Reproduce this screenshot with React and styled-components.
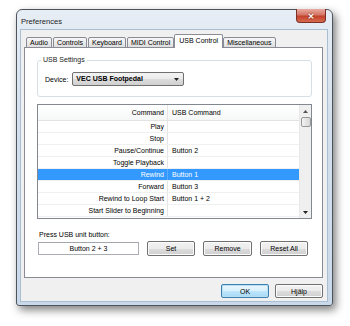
import React, { useState } from 'react'
import styled, { createGlobalStyle } from 'styled-components'

const GlobalStyle = createGlobalStyle`
  html, body {
    margin: 0;
    background: #ffffff;
    font-family: "Liberation Sans", Arial, sans-serif;
    font-size: 7px;
    line-height: 8px;
    color: #000;
  }
`;

const Page = styled.div`
  width: 350px;
  height: 326px;
  padding: 9px 0 0 16px;
  box-sizing: border-box;
  overflow: hidden;
`;

const Window = styled.div`
  width: 317px;
  height: 297px;
  box-sizing: border-box;
  border: 1px solid #4d545c;
  border-radius: 6px 6px 3px 3px;
  background: linear-gradient(#e6edf5, #d3dfec 40%, #cad9ea);
  box-shadow: 3px 4px 9px rgba(0, 0, 0, 0.5);
  padding: 0 4px 3px 3px;
  display: flex;
  flex-direction: column;
`;

const TitleBar = styled.div`
  height: 19px;
  flex: none;
  display: flex;
  align-items: flex-start;
  justify-content: space-between;
`;

const Title = styled.div`
  padding: 7px 0 0 1px;
  font-size: 7.6px;
  line-height: 9px;
  color: #1b1b1b;
`;

const CloseButton = styled.div`
  width: 30px;
  height: 14px;
  margin: -1px 2px 0 0;
  box-sizing: border-box;
  border: 1px solid #7b2f25;
  border-top: none;
  border-radius: 0 0 4px 4px;
  background: linear-gradient(#e8aba0, #d47564 45%, #c4422c 55%, #d66c4f);
  display: flex;
  align-items: center;
  justify-content: center;
  color: #fff;
  font-family: "DejaVu Sans", sans-serif;
  font-weight: bold;
  font-size: 9px;
  line-height: 10px;
  text-shadow: 0 0 2px #6a1a10;
`;

const Client = styled.div`
  flex: 1;
  min-height: 0;
  background: #f0f0f0;
  border: 1px solid #a9bdd3;
  padding: 4px 4px 4px 3px;
  display: flex;
  flex-direction: column;
`;

const TabStrip = styled.div`
  flex: none;
  display: flex;
  align-items: flex-end;
  padding-left: 2px;
  gap: 1px;
  position: relative;
  z-index: 1;
  margin-bottom: -1px;
`;

const Tab = styled.div`
  height: ${p => (p.$active ? '14px' : '11px')};
  box-sizing: border-box;
  padding: 0 ${p => (p.$active ? '4px' : '3px')};
  margin: 0 ${p => (p.$active ? '-1px' : '0')};
  border: 1px solid #898c95;
  border-bottom: ${p => (p.$active ? 'none' : '1px solid #898c95')};
  border-radius: 2px 2px 0 0;
  background: ${p => (p.$active ? '#ffffff' : 'linear-gradient(#f7f7f7, #ebebeb 50%, #dedede)')};
  display: flex;
  align-items: ${p => (p.$active ? 'flex-start' : 'center')};
  padding-top: ${p => (p.$active ? '2px' : '0')};
  line-height: 8px;
  white-space: nowrap;
`;

const Panel = styled.div`
  height: 231px;
  flex: none;
  box-sizing: border-box;
  background: #ffffff;
  border: 1px solid #898c95;
  padding: 8px 10px 0 12px;
  display: flex;
  flex-direction: column;
`;

const GroupBox = styled.fieldset`
  margin: 0;
  border: 1px solid #d5dfe5;
  border-radius: 3px;
  padding: 8px 7px 10px 7px;
  display: flex;
  align-items: center;
  gap: 4px;
`;

const GroupLabel = styled.legend`
  margin-left: -4px;
  padding: 0 2px;
  line-height: 8px;
  color: #222;
`;

const FieldLabel = styled.span`
  line-height: 9px;
`;

const Combo = styled.div`
  width: 112px;
  height: 14px;
  box-sizing: border-box;
  border: 1px solid #707070;
  border-radius: 2px;
  background: linear-gradient(#f3f3f3, #ebebeb 50%, #dddddd 51%, #cfcfcf);
  display: flex;
  align-items: center;
  justify-content: space-between;
  padding: 0 4px 0 3px;
  font-weight: bold;
`;

const Arrow = styled.svg`
  width: 5px;
  height: 3px;
`;

const Table = styled.div`
  margin-top: 7px;
  height: 115px;
  flex: none;
  box-sizing: border-box;
  border: 1px solid #828790;
  display: flex;
  overflow: hidden;
`;

const List = styled.div`
  flex: 1;
  display: flex;
  flex-direction: column;
`;

const Row = styled.div`
  display: grid;
  grid-template-columns: 130px 1fr;
  height: ${p => (p.$header ? '16px' : '12px')};
  flex: none;
  box-sizing: border-box;
  border-bottom: 1px solid ${p => (p.$header ? '#e3e3e3' : '#f0f0f0')};
  background: ${p => (p.$selected ? '#3399ff' : p.$header ? 'linear-gradient(#ffffff, #f6f7f8)' : 'transparent')};
  color: ${p => (p.$selected ? '#ffffff' : '#000')};
`;

const Cell = styled.div`
  display: flex;
  align-items: center;
  padding: 0 ${p => (p.$right ? '3px' : '4px')};
  justify-content: ${p => (p.$right ? 'flex-end' : 'flex-start')};
  border-right: ${p => (p.$right ? '1px solid' : 'none')};
  border-color: ${p => (p.$selected ? '#5aaefc' : '#e5e5e5')};
  white-space: nowrap;
  line-height: 9px;
`;

const ScrollBar = styled.div`
  width: 12px;
  box-sizing: border-box;
  border-left: 1px solid #e8e8e8;
  background: #efefef;
  display: flex;
  flex-direction: column;
  align-items: center;
`;

const ScrollArrow = styled.div`
  height: 12px;
  width: 100%;
  display: flex;
  align-items: center;
  justify-content: center;
`;

const Thumb = styled.div`
  width: 10px;
  height: 10px;
  box-sizing: border-box;
  border: 1px solid #979797;
  border-radius: 2px;
  background: linear-gradient(90deg, #f4f4f4, #e4e4e4 50%, #d8d8d8);
`;

const Track = styled.div`
  flex: 1;
`;

const PressLabel = styled.div`
  margin-top: 11px;
  line-height: 9px;
  padding-left: 2px;
`;

const ActionRow = styled.div`
  margin-top: 2px;
  display: flex;
  align-items: center;
  gap: 8px;
  padding-left: 1px;
`;

const CaptureBox = styled.div`
  width: 101px;
  height: 13px;
  box-sizing: border-box;
  border: 1px solid #abadb3;
  border-top-color: #a3a6ad;
  background: #ffffff;
  display: flex;
  align-items: center;
  justify-content: center;
`;

const Button = styled.div`
  width: ${p => p.$w || 48}px;
  height: ${p => p.$h || 15}px;
  box-sizing: border-box;
  border: 1px solid ${p => (p.$default ? '#3c7fb1' : '#707070')};
  border-radius: 2px;
  background: ${p => (p.$default
    ? 'linear-gradient(#eaf6fd, #d9f0fc 50%, #bee6fd 51%, #a7d9f5)'
    : 'linear-gradient(#f2f2f2, #ebebeb 50%, #dddddd 51%, #cfcfcf)')};
  box-shadow: inset 0 0 0 1px ${p => (p.$default ? '#b9dff3' : '#fcfcfc')};
  display: flex;
  align-items: center;
  justify-content: center;
  line-height: 9px;
`;

const Footer = styled.div`
  flex: none;
  margin-top: 6px;
  display: flex;
  justify-content: flex-end;
  gap: 6px;
`;

const tabs = ['Audio', 'Controls', 'Keyboard', 'MIDI Control', 'USB Control', 'Miscellaneous'];

const commands = [
  ['Play', ''],
  ['Stop', ''],
  ['Pause/Continue', 'Button 2'],
  ['Toggle Playback', ''],
  ['Rewind', 'Button 1'],
  ['Forward', 'Button 3'],
  ['Rewind to Loop Start', 'Button 1 + 2'],
  ['Start Slider to Beginning', ''],
];

const Triangle = ({ up }) => (
  <Arrow viewBox="0 0 5 3">
    <polygon points={up ? '0,3 5,3 2.5,0' : '0,0 5,0 2.5,3'} fill={up ? '#555' : '#222'} />
  </Arrow>
);

const App = () => {
  const [activeTab] = useState('USB Control');
  const [selected, setSelected] = useState(4);

  return (
    <Page>
      <GlobalStyle />
      <Window>
        <TitleBar>
          <Title>Preferences</Title>
          <CloseButton>×</CloseButton>
        </TitleBar>
        <Client>
          <TabStrip>
            {tabs.map(t => (
              <Tab key={t} $active={t === activeTab}>{t}</Tab>
            ))}
          </TabStrip>
          <Panel>
            <GroupBox>
              <GroupLabel>USB Settings</GroupLabel>
              <FieldLabel>Device:</FieldLabel>
              <Combo>
                VEC USB Footpedal
                <Triangle />
              </Combo>
            </GroupBox>

            <Table>
              <List>
                <Row $header>
                  <Cell $right>Command</Cell>
                  <Cell>USB Command</Cell>
                </Row>
                {commands.map(([cmd, usb], i) => (
                  <Row key={cmd} $selected={i === selected} onClick={() => setSelected(i)}>
                    <Cell $right $selected={i === selected}>{cmd}</Cell>
                    <Cell>{usb}</Cell>
                  </Row>
                ))}
              </List>
              <ScrollBar>
                <ScrollArrow><Triangle up /></ScrollArrow>
                <Thumb />
                <Track />
                <ScrollArrow><Triangle /></ScrollArrow>
              </ScrollBar>
            </Table>

            <PressLabel>Press USB unit button:</PressLabel>
            <ActionRow>
              <CaptureBox>Button 2 + 3</CaptureBox>
              <Button>Set</Button>
              <Button $w={49}>Remove</Button>
              <Button>Reset All</Button>
            </ActionRow>
          </Panel>
          <Footer>
            <Button $default $h={14}>OK</Button>
            <Button $h={14}>Hjälp</Button>
          </Footer>
        </Client>
      </Window>
    </Page>
  );
};

export default App;
